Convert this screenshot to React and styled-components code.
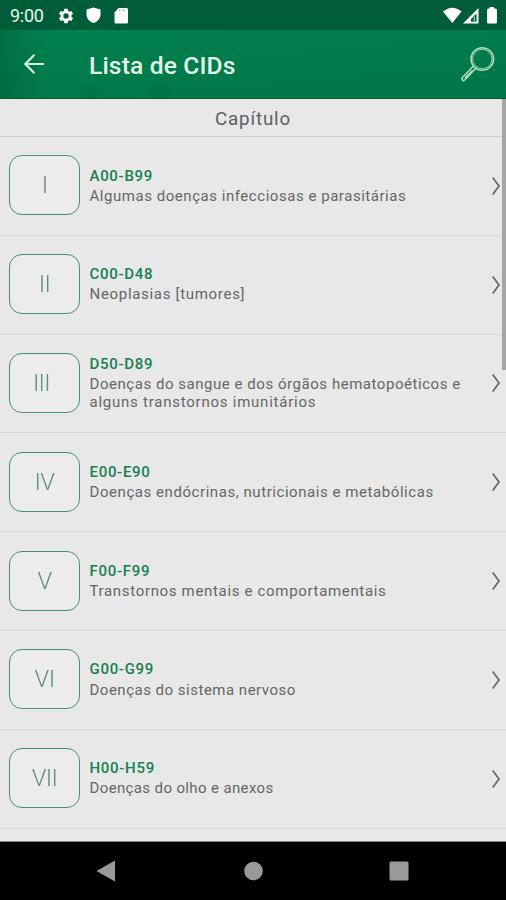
import React from 'react';
import styled, { createGlobalStyle } from 'styled-components';

const GlobalStyle = createGlobalStyle`
  * {
    box-sizing: border-box;
  }
  body {
    margin: 0;
    background: #000;
    font-family: Roboto, 'Liberation Sans', sans-serif;
  }
`;

const Screen = styled.div`
  display: flex;
  flex-direction: column;
  width: 506px;
  height: 900px;
  overflow: hidden;
`;

const StatusBar = styled.div`
  display: flex;
  flex: none;
  justify-content: space-between;
  height: 30px;
  padding: 0 7px 0 10px;
  background: #015c3a;
  > div {
    display: flex;
    align-items: center;
    height: 31px;
  }
`;

const Clock = styled.span`
  width: 47px;
  color: #e9f5ec;
  font-size: 18px;
  letter-spacing: -0.3px;
  line-height: 33px;
`;

const Gap = styled.span`
  width: 10px;
`;

const AppBar = styled.header`
  display: flex;
  flex: none;
  align-items: center;
  height: 69px;
  padding: 0 10px 0 23px;
  border-bottom: 1px solid #0b5a2b;
  background:
    radial-gradient(ellipse 12px 16px at 160px 64px, rgba(0, 88, 56, 0.35), transparent),
    radial-gradient(ellipse 14px 14px at 90px 66px, rgba(0, 88, 56, 0.3), transparent),
    linear-gradient(90deg, rgba(0, 80, 50, 0.35), transparent 45px),
    linear-gradient(175deg, #02804f, #007a4b 60%, #017549);
  > svg {
    flex: none;
  }
`;

const Title = styled.h1`
  flex: 1;
  margin: 2px 0 0 44px;
  color: #e4f3ea;
  font-size: 24.6px;
  font-weight: 500;
  letter-spacing: 0.15px;
`;

const Content = styled.main`
  position: relative;
  flex: none;
  height: 743px;
  overflow: hidden;
  background: #e8e8e8;
  border-bottom: 1px solid #8a8a8a;
`;

const SectionTitle = styled.h2`
  height: 38px;
  margin: 0;
  border-bottom: 1.5px solid #cfcfcf;
  color: #606060;
  font-size: 18.8px;
  font-weight: 400;
  letter-spacing: 0.85px;
  line-height: 40px;
  text-align: center;
`;

const List = styled.ul`
  margin: 0;
  padding: 0;
  list-style: none;
`;

const Row = styled.li`
  display: flex;
  align-items: center;
  height: 98.8px;
  padding: 0 5px 0 9px;
  border-bottom: 1px solid #dadada;
  > svg {
    flex: none;
  }
`;

const Numeral = styled.div`
  display: flex;
  flex: none;
  align-items: center;
  justify-content: center;
  width: 71px;
  height: 60px;
  margin-bottom: 1px;
  padding-right: ${(props) => props.$shift}px;
  border: 1.5px solid #43936c;
  border-radius: 13px;
  background: #ececec;
  color: #5d9079;
  font-size: 23.8px;
  font-weight: 300;
  letter-spacing: -0.6px;
  will-change: transform;
`;

const Info = styled.div`
  flex: 1;
  margin: 1px 0 0 9.5px;
  line-height: 17.6px;
`;

const Code = styled.div`
  margin-bottom: 2.6px;
  color: #16804f;
  font-size: 15px;
  font-weight: 500;
  letter-spacing: 0.7px;
`;

const Line = styled.div`
  color: #666;
  font-size: 15px;
  letter-spacing: ${(props) => props.$tracking}px;
  white-space: nowrap;
`;

const ScrollThumb = styled.div`
  position: absolute;
  top: 0;
  right: 0;
  width: 4px;
  height: 271px;
  background: #a5a5a5;
`;

const NavBar = styled.nav`
  display: flex;
  flex: 1;
  align-items: center;
  justify-content: space-between;
  padding: 0 97px 0 96px;
  background: #000;
`;

const chapters = [
  { numeral: 'I', code: 'A00-B99', shift: 0, lines: [{ text: 'Algumas doenças infecciosas e parasitárias', tracking: 0.54 }] },
  { numeral: 'II', code: 'C00-D48', shift: 0, lines: [{ text: 'Neoplasias [tumores]', tracking: 0.69 }] },
  {
    numeral: 'III',
    code: 'D50-D89',
    shift: 6,
    lines: [
      { text: 'Doenças do sangue e dos órgãos hematopoéticos e', tracking: 0.54 },
      { text: 'alguns transtornos imunitários', tracking: 0.76 },
    ],
  },
  { numeral: 'IV', code: 'E00-E90', shift: 0, lines: [{ text: 'Doenças endócrinas, nutricionais e metabólicas', tracking: 0.56 }] },
  { numeral: 'V', code: 'F00-F99', shift: 0, lines: [{ text: 'Transtornos mentais e comportamentais', tracking: 0.67 }] },
  { numeral: 'VI', code: 'G00-G99', shift: 0, lines: [{ text: 'Doenças do sistema nervoso', tracking: 0.5 }] },
  { numeral: 'VII', code: 'H00-H59', shift: 0, lines: [{ text: 'Doenças do olho e anexos', tracking: 0.37 }] },
];

function GearIcon() {
  return (
    <svg width="18" height="18" viewBox="0 0 24 24" fill="#fff">
      <path d="M19.14 12.94c.04-.3.06-.61.06-.94s-.02-.64-.07-.94l2.03-1.58a.5.5 0 0 0 .12-.61l-1.92-3.32a.5.5 0 0 0-.59-.22l-2.39.96a7 7 0 0 0-1.62-.94l-.36-2.54a.48.48 0 0 0-.48-.41h-3.84a.48.48 0 0 0-.47.41l-.36 2.54a7.4 7.4 0 0 0-1.62.94l-2.39-.96a.48.48 0 0 0-.59.22L2.74 8.87a.47.47 0 0 0 .12.61l2.03 1.58a6 6 0 0 0 0 1.88l-2.03 1.58a.5.5 0 0 0-.12.61l1.92 3.32c.12.22.37.29.59.22l2.39-.96c.5.38 1.03.7 1.62.94l.36 2.54c.05.24.24.41.48.41h3.84c.24 0 .44-.17.47-.41l.36-2.54a7 7 0 0 0 1.62-.94l2.39.96c.22.08.47 0 .59-.22l1.92-3.32a.5.5 0 0 0-.12-.61zM12 15.6a3.6 3.6 0 1 1 0-7.2 3.6 3.6 0 0 1 0 7.2z" />
    </svg>
  );
}

function StatusIcons() {
  return (
    <svg width="48" height="18" viewBox="0 0 48 18" fill="#fff">
      <path d="M8.5.5 15.500 2.500v5c0 4-2.800 7.200-7 8.500-4.200-1.300-7-4.500-7-8.500v-5z" />
      <path d="M33.500 1h8q1.500 0 1.500 1.500V15q0 1.500-1.500 1.500H31q-1.500 0-1.500-1.500V5.500z" />
      <path fill="#7fae99" d="M34.200 2.500h1v1.800h-1zM36.700 2.500h1v1.800h-1zM39.200 2.500h1v1.800h-1z" />
    </svg>
  );
}

function SignalIcons() {
  return (
    <svg width="56" height="18" viewBox="0 0 56 18" fill="#fff">
      <path d="M0 4.500Q9.300-3.200 18.600 4.500L9.300 16z" />
      <path d="M35.500 1V16.500H20z" />
      <path fill="#015c3a" d="M33.500 6.500V14.800H28V12z" />
      <path fill="#8fb9a6" d="M30.500 10.500 32 9v5.800h-1.500z" />
      <path d="M46.500 0h4.500v1.500h1.500q1.500 0 1.500 1.500v12q0 1.500-1.500 1.500h-7q-1.500 0-1.500-1.500V3q0-1.500 1.500-1.500h1z" />
    </svg>
  );
}

function BackIcon() {
  return (
    <svg width="22" height="22" viewBox="0 0 22 22" fill="none" stroke="#d9f0e3" strokeWidth="2.2">
      <path d="M21 11H2.500M11.500 1.800 2.300 11l9.200 9.200" />
    </svg>
  );
}

function SearchIcon() {
  return (
    <svg width="36" height="36" viewBox="0 0 36 36" fill="none" stroke="#b3dac4" strokeWidth="1.5">
      <circle cx="22.300" cy="13" r="11.300" />
      <circle cx="22.300" cy="13" r="9.700" strokeWidth=".9" />
      <path d="M13.300 20.300 2 32q-.6 1 .4 2t2 .4L15.800 22.300M12.500 24.500 5 32" />
    </svg>
  );
}

function Chevron() {
  return (
    <svg width="10" height="20" viewBox="0 0 10 20" fill="none" stroke="#676767" strokeWidth="1.7">
      <path d="M1.700 1.500 8 10l-6.300 8.500" />
    </svg>
  );
}

function NavIcons() {
  return (
    <NavBar>
      <svg width="20" height="22" viewBox="0 0 20 22" fill="#999">
        <path d="M19 .5v21L.5 11z" />
      </svg>
      <svg width="20" height="20" viewBox="0 0 20 20" fill="#999">
        <circle cx="10.500" cy="10" r="9.300" />
      </svg>
      <svg width="20" height="20" viewBox="0 0 20 20" fill="#999">
        <rect x=".5" y=".5" width="19" height="19" rx="1.500" />
      </svg>
    </NavBar>
  );
}

function App() {
  return (
    <>
      <GlobalStyle />
      <Screen>
        <StatusBar>
          <div>
            <Clock>9:00</Clock>
            <GearIcon />
            <Gap />
            <StatusIcons />
          </div>
          <div>
            <SignalIcons />
          </div>
        </StatusBar>
        <AppBar>
          <BackIcon />
          <Title>Lista de CIDs</Title>
          <SearchIcon />
        </AppBar>
        <Content>
          <SectionTitle>Capítulo</SectionTitle>
          <List>
            {chapters.map((item) => (
              <Row key={item.code}>
                <Numeral $shift={item.shift}>{item.numeral}</Numeral>
                <Info>
                  <Code>{item.code}</Code>
                  {item.lines.map((line) => (
                    <Line key={line.text} $tracking={line.tracking}>
                      {line.text}
                    </Line>
                  ))}
                </Info>
                <Chevron />
              </Row>
            ))}
          </List>
          <ScrollThumb />
        </Content>
        <NavIcons />
      </Screen>
    </>
  );
}

export default App;
